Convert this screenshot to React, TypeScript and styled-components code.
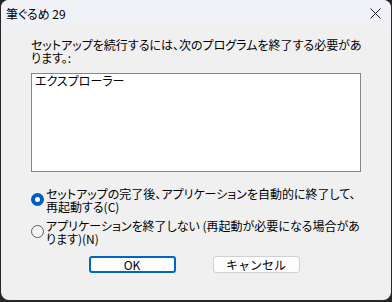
import { FC } from 'react';
import styled, { createGlobalStyle } from 'styled-components';

const GlobalStyle = createGlobalStyle`
  html, body {
    margin: 0;
    padding: 0;
    background: #262626;
  }
  body {
    font-family: 'Noto Sans CJK JP', 'Noto Sans', sans-serif;
    font-feature-settings: 'palt';
    color: #000;
  }
`;

const Window = styled.div`
  width: 390px;
  height: 300px;
  margin: 0 1px;
  display: flex;
  flex-direction: column;
  background: #f0f0f0;
  border-radius: 8px;
  overflow: hidden;
`;

const TitleBar = styled.div`
  height: 26px;
  display: flex;
  align-items: center;
  justify-content: space-between;
  padding: 0 10px 0 5px;
  background: #eff1f7;
  font-size: 12px;
`;

const Title = styled.span`
  letter-spacing: 0;
`;

const Content = styled.div`
  display: flex;
  flex-direction: column;
  padding: 12px 30px 0 30px;
  font-size: 12px;
  line-height: 13px;
`;

const Message = styled.p`
  margin: 0;
  white-space: nowrap;
`;

const ListBox = styled.div`
  margin-top: 9px;
  height: 99px;
  box-sizing: border-box;
  border: 1px solid #82878f;
  background: #fff;
  padding: 0 3px;
`;

const RadioGroup = styled.div`
  display: flex;
  flex-direction: column;
  gap: 6px;
  margin-top: 15px;
`;

const RadioRow = styled.label`
  display: flex;
  align-items: center;
  gap: 2px;
`;

const RadioMark = styled.span<{ $checked?: boolean }>`
  flex: none;
  width: 13px;
  height: 13px;
  margin-top: -2px;
  box-sizing: border-box;
  border-radius: 50%;
  display: flex;
  align-items: center;
  justify-content: center;
  background: ${(p) => (p.$checked ? '#005fb8' : '#f5f5f5')};
  border: ${(p) => (p.$checked ? 'none' : '1px solid #5d5d5d')};

  &::after {
    content: '';
    display: ${(p) => (p.$checked ? 'block' : 'none')};
    width: 5px;
    height: 5px;
    border-radius: 50%;
    background: #fff;
  }
`;

const RadioText = styled.span`
  white-space: nowrap;
`;

const Buttons = styled.div`
  display: flex;
  justify-content: center;
  gap: 37px;
  margin-top: 11px;
  padding-right: 4px;
`;

const Button = styled.button<{ $default?: boolean }>`
  width: 87px;
  height: 17px;
  padding: 0;
  box-sizing: border-box;
  font-family: inherit;
  font-size: 12px;
  font-weight: 400;
  line-height: 1;
  background: #fdfdfd;
  border-radius: 3px;
  border: ${(p) => (p.$default ? '2px solid #0067c0' : '1px solid #d0d0d0')};
  color: #000;
`;

const CloseIcon: FC = () => (
  <svg width="11" height="11" viewBox="0 0 11 11">
    <path d="M0.5 0.5 L10.5 10.5 M10.5 0.5 L0.5 10.5" stroke="#1a1a1a" strokeWidth="1" />
  </svg>
);

const App: FC = () => (
  <>
    <GlobalStyle />
    <Window>
      <TitleBar>
        <Title>筆ぐるめ 29</Title>
        <CloseIcon />
      </TitleBar>
      <Content>
        <Message>
          セットアップを続行するには、次のプログラムを終了する必要があ
          <br />
          ります。:
        </Message>
        <ListBox>エクスプローラー</ListBox>
        <RadioGroup>
          <RadioRow>
            <RadioMark $checked />
            <RadioText>
              セットアップの完了後、アプリケーションを自動的に終了して、
              <br />
              再起動する(C)
            </RadioText>
          </RadioRow>
          <RadioRow>
            <RadioMark />
            <RadioText>
              アプリケーションを終了しない (再起動が必要になる場合があ
              <br />
              ります)(N)
            </RadioText>
          </RadioRow>
        </RadioGroup>
        <Buttons>
          <Button $default>OK</Button>
          <Button>キャンセル</Button>
        </Buttons>
      </Content>
    </Window>
  </>
);

export default App;
